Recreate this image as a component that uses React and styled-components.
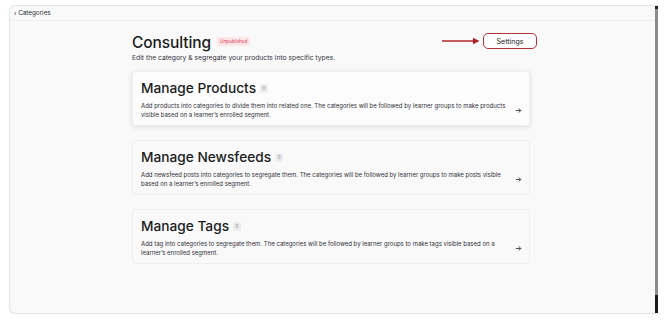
import styled, { createGlobalStyle } from "styled-components";

const GlobalStyle = createGlobalStyle`
    html, body {
        margin: 0;
        padding: 0;
        background: #ffffff;
        font-family: Inter, "Noto Sans", sans-serif;
        color: #1c1d22;
    }
    * { box-sizing: border-box; }
`;

const sections = [
    {
        title: "Manage Products",
        text: "Add products into categories to divide them into related one. The categories will be followed by learner groups to make products visible based on a learner’s enrolled segment.",
        raised: true,
    },
    {
        title: "Manage Newsfeeds",
        text: "Add newsfeed posts into categories to segregate them. The categories will be followed by learner groups to make posts visible based on a learner’s enrolled segment.",
    },
    {
        title: "Manage Tags",
        text: "Add tag into categories to segregate them. The categories will be followed by learner groups to make tags visible based on a learner’s enrolled segment.",
    },
];

const App = () => {
    return (
        <>
            <GlobalStyle />
            <Page>
                <Frame>
                    <Main>
                        <TopBar>
                            <BackLink>‹ Categories</BackLink>
                        </TopBar>
                        <Column>
                            <Header>
                                <TitleBlock>
                                    <TitleRow>
                                        <Title>Consulting</Title>
                                        <Status>Unpublished</Status>
                                    </TitleRow>
                                    <Subtitle>Edit the category &amp; segregate your products into specific types.</Subtitle>
                                </TitleBlock>
                                <Actions>
                                    <svg width="38" height="8" viewBox="0 0 38 8">
                                        <line x1="0" y1="4" x2="33" y2="4" stroke="#b0232b" strokeWidth="1.6" />
                                        <path d="M31 0.8 L37.5 4 L31 7.2 Z" fill="#b0232b" />
                                    </svg>
                                    <SettingsButton>Settings</SettingsButton>
                                </Actions>
                            </Header>
                            <Cards>
                                {sections.map((s) => (
                                    <Card key={s.title} $raised={s.raised}>
                                        <CardTitleRow>
                                            <CardTitle>{s.title}</CardTitle>
                                            <Count>0</Count>
                                        </CardTitleRow>
                                        <CardBody>
                                            <CardText>{s.text}</CardText>
                                            <Arrow>
                                                <svg width="7" height="7" viewBox="0 0 8 8">
                                                    <path d="M1 4 H6.5 M4.2 1.6 L6.6 4 L4.2 6.4" fill="none" stroke="#333" strokeWidth="1" />
                                                </svg>
                                            </Arrow>
                                        </CardBody>
                                    </Card>
                                ))}
                            </Cards>
                        </Column>
                    </Main>
                    <ScrollTrack>
                        <ScrollThumb />
                    </ScrollTrack>
                </Frame>
            </Page>
        </>
    );
};

export default App;

// Styled Components
const Page = styled.div`
    width: 670px;
    height: 320px;
    padding: 5px 12px 6px 9px;
`;

const Frame = styled.div`
    display: flex;
    height: 309px;
    background: #f9f9fa;
    border: 1px solid #e2e4e8;
    border-right: none;
    border-radius: 6px 0 0 6px;
    overflow: hidden;
`;

const Main = styled.div`
    flex: 1;
    display: flex;
    flex-direction: column;
`;

const TopBar = styled.div`
    height: 15px;
    display: flex;
    align-items: center;
    padding-left: 4px;
    border-bottom: 1px solid #eff0f2;
`;

const BackLink = styled.span`
    font-size: 6.3px;
    color: #2a2b30;
`;

const Column = styled.div`
    width: 398px;
    align-self: center;
    margin-left: -3px;
    display: flex;
    flex-direction: column;
    padding-top: 12px;
`;

const Header = styled.div`
    width: 405px;
    display: flex;
    justify-content: space-between;
    align-items: flex-start;
`;

const TitleBlock = styled.div`
    display: flex;
    flex-direction: column;
`;

const TitleRow = styled.div`
    display: flex;
    align-items: center;
    gap: 6px;
`;

const Title = styled.h1`
    margin: 0;
    font-size: 15.5px;
    font-weight: 500;
    line-height: 20px;
    letter-spacing: -0.1px;
    color: #1b1c21;
`;

const Status = styled.span`
    font-size: 4.6px;
    color: #d9475c;
    background: #fde6e9;
    padding: 2px 3px;
    border-radius: 2px;
    margin-top: -4px;
`;

const Subtitle = styled.p`
    margin: 0;
    font-size: 6.75px;
    color: #35363c;
    line-height: 9px;
`;

const Actions = styled.div`
    display: flex;
    align-items: center;
    gap: 3px;
    margin-top: 0;
`;

const SettingsButton = styled.button`
    width: 54px;
    height: 16px;
    font-family: Inter, "Noto Sans", sans-serif;
    font-size: 7px;
    color: #222;
    background: #ffffff;
    border: 1px solid #b5313a;
    border-radius: 5px;
    padding: 0;
`;

const Cards = styled.div`
    display: flex;
    flex-direction: column;
    gap: 14px;
    margin-top: 9px;
`;

const Card = styled.div`
    height: 55px;
    padding: 6px 6px 0 8px;
    border-radius: 3px;
    background: ${(p) => (p.$raised ? "#fcfcfc" : "#f9f9fa")};
    border: 1px solid ${(p) => (p.$raised ? "#eeeef0" : "#eeeff1")};
    box-shadow: ${(p) => (p.$raised ? "0 1px 5px rgba(0,0,0,0.12)" : "none")};
`;

const CardTitleRow = styled.div`
    display: flex;
    align-items: center;
    gap: 4px;
    height: 20px;
`;

const CardTitle = styled.h2`
    margin: 0;
    font-size: 13.7px;
    font-weight: 500;
    color: #1b1c21;
`;

const Count = styled.span`
    display: inline-flex;
    align-items: center;
    justify-content: center;
    width: 8px;
    height: 9px;
    font-size: 4.5px;
    color: #777;
    background: #ececee;
    border-radius: 2px;
`;

const CardBody = styled.div`
    display: flex;
    align-items: center;
    justify-content: space-between;
    margin-top: 3px;
`;

const CardText = styled.p`
    margin: 0;
    width: 376px;
    font-size: 6px;
    line-height: 9px;
    color: #2f3036;
`;

const Arrow = styled.span`
    display: flex;
    margin-right: 1px;
`;

const ScrollTrack = styled.div`
    width: 3px;
    display: flex;
    flex-direction: column;
    justify-content: flex-end;
    background: #8c8c8c;
    border-top: 3px solid #222;
`;

const ScrollThumb = styled.div`
    height: 18px;
    background: #1a1a1a;
`;
